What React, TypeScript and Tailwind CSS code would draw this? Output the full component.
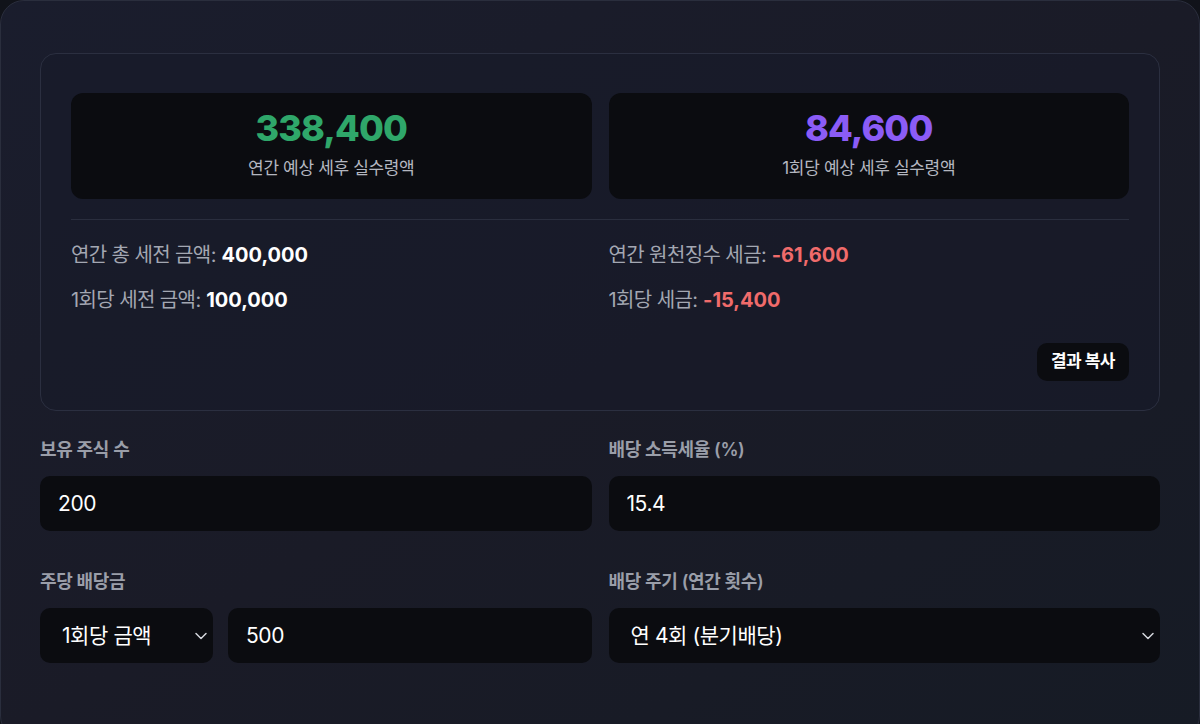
import React from 'react';
import { ChevronDown } from 'lucide-react';

const font = { fontFamily: 'Inter, "Noto Sans CJK KR", sans-serif' };

function Stat({ value, label, color }: { value: string; label: string; color: string }) {
  return (
    <div className="flex h-[106px] flex-col items-center rounded-xl bg-[#0b0c10] pt-[15px]">
      <div className={`text-[36px] font-extrabold leading-[40px] tracking-tight ${color}`}>{value}</div>
      <div className="mt-2 text-[17px] leading-6 tracking-[-0.02em] text-[#b4b7c0]">{label}</div>
    </div>
  );
}

function Line({ label, value, tone }: { label: string; value: string; tone: string }) {
  return (
    <div className="text-[20px] leading-[27px] text-[#a3a7b2]">
      <span className="tracking-[-0.03em]">{label}:</span> <span className={`font-bold ${tone}`}>{value}</span>
    </div>
  );
}

function Field({ label, children }: { label: string; children: React.ReactNode }) {
  return (
    <div className="flex flex-col">
      <label className="mb-[14px] text-[18px] font-semibold leading-6 tracking-[-0.02em] text-[#9a9ea9]">
        {label}
      </label>
      {children}
    </div>
  );
}

function Box({ value, select, className = '' }: { value: string; select?: boolean; className?: string }) {
  return (
    <div
      className={`flex h-[55px] items-center justify-between rounded-[10px] bg-[#0b0c10] text-[21px] tracking-[-0.02em] text-white ${
        select ? 'pl-[22px] pr-[2px]' : 'px-[18px]'
      } ${className}`}
    >
      <span>{value}</span>
      {select && <ChevronDown className="h-5 w-5 text-[#d4d6dc]" strokeWidth={1.8} />}
    </div>
  );
}

export default function App() {
  return (
    <div className="min-h-screen bg-[#11131a]" style={font}>
      <div className="min-h-[740px] rounded-3xl border border-[#2a2e3d] bg-gradient-to-br from-[#1a1d2d] via-[#1a1b27] to-[#161b25] px-[39px] pt-[52px] pb-10">
        <div className="rounded-2xl border border-[#2b2f40] bg-[#181b29]/60 px-[30px] pt-[39px] pb-[29px]">
          <div className="grid grid-cols-2 gap-[17px]">
            <Stat value="338,400" label="연간 예상 세후 실수령액" color="text-[#2fa76a]" />
            <Stat value="84,600" label="1회당 예상 세후 실수령액" color="text-[#8b5cf6]" />
          </div>
          <div className="mt-5 border-t border-[#2a2e3e]" />
          <div className="mt-[22px] grid grid-cols-2 gap-x-[17px] gap-y-[18px]">
            <Line label="연간 총 세전 금액" value="400,000" tone="text-white" />
            <Line label="연간 원천징수 세금" value="-61,600" tone="text-[#f06b6b]" />
            <Line label="1회당 세전 금액" value="100,000" tone="text-white" />
            <Line label="1회당 세금" value="-15,400" tone="text-[#f06b6b]" />
          </div>
          <div className="mt-[29px] flex justify-end">
            <button className="h-[38px] rounded-[10px] bg-[#0b0c10] px-[14px] text-[17px] font-bold tracking-[-0.03em] text-white">
              결과 복사
            </button>
          </div>
        </div>

        <div className="mt-[27px] grid grid-cols-2 gap-x-[17px] gap-y-[39px]">
          <Field label="보유 주식 수">
            <Box value="200" />
          </Field>
          <Field label="배당 소득세율 (%)">
            <Box value="15.4" />
          </Field>
          <Field label="주당 배당금">
            <div className="flex gap-[15px]">
              <Box value="1회당 금액" select className="w-[173px] shrink-0" />
              <Box value="500" className="flex-1" />
            </div>
          </Field>
          <Field label="배당 주기 (연간 횟수)">
            <Box value="연 4회 (분기배당)" select />
          </Field>
        </div>
      </div>
    </div>
  );
}
